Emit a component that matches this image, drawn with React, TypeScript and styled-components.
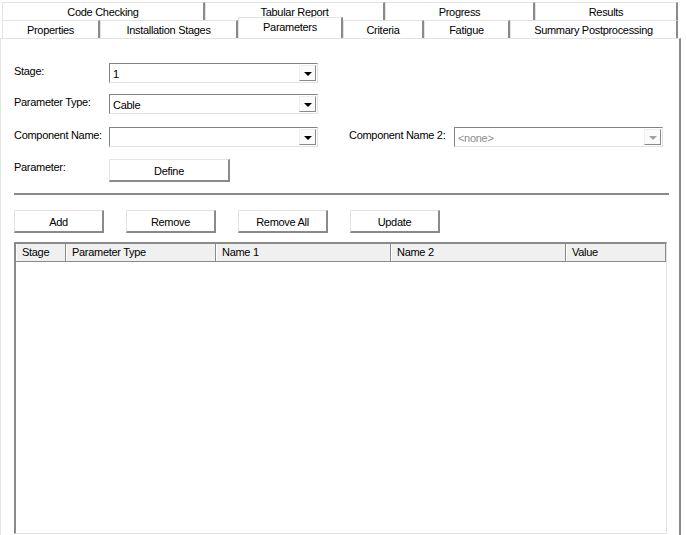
import React from "react";
import styled, { createGlobalStyle } from "styled-components";

const Global = createGlobalStyle`
  html, body {
    margin: 0;
    padding: 0;
    background: #ffffff;
  }
  body {
    font-family: "Liberation Sans", Arial, sans-serif;
    font-size: 11px;
    letter-spacing: -0.3px;
    color: #000;
  }
`;

const Window = styled.div`
  width: 686px;
  height: 535px;
  overflow: hidden;
  background: #fff;
  display: flex;
  flex-direction: column;
`;

const TabStrip = styled.div`
  padding-top: 2px;
  display: flex;
  flex-direction: column;
  height: 36px;
`;

const TabRow = styled.div`
  display: flex;
  height: 18px;
  padding-left: 2px;
  position: relative;
`;

const Tab = styled.div<{ $w: number; $active?: boolean }>`
  width: ${(p) => p.$w}px;
  box-sizing: border-box;
  height: ${(p) => (p.$active ? 21 : 18)}px;
  margin-top: ${(p) => (p.$active ? -3 : 0)}px;
  border-top: 1px solid #e3e3e3;
  border-left: 1px solid #e3e3e3;
  border-right: 2px solid #8a8a8a;
  background: #fff;
  display: flex;
  align-items: center;
  justify-content: center;
  padding-top: ${(p) => (p.$active ? 0 : 1)}px;
  padding-bottom: ${(p) => (p.$active ? 3 : 0)}px;
  white-space: nowrap;
  position: relative;
  z-index: ${(p) => (p.$active ? 2 : 1)};
`;

const Panel = styled.div`
  flex: 1;
  width: 681px;
  box-sizing: border-box;
  border-top: 1px solid #e3e3e3;
  border-left: 1px solid #e3e3e3;
  border-right: 2px solid #8a8a8a;
  padding: 24px 0 0 13px;
  display: flex;
  flex-direction: column;
`;

const FormRow = styled.div<{ $h: number }>`
  display: flex;
  align-items: flex-start;
  height: ${(p) => p.$h}px;
`;

const Label = styled.div<{ $w: number }>`
  width: ${(p) => p.$w}px;
  padding-top: 2px;
  white-space: nowrap;
`;

const Combo = styled.div<{ $disabled?: boolean }>`
  width: 209px;
  height: 20px;
  box-sizing: border-box;
  border-top: 1px solid #828282;
  border-left: 1px solid #828282;
  border-right: 1px solid #e3e3e3;
  border-bottom: 1px solid #e3e3e3;
  display: flex;
  align-items: center;
  background: #fff;
  color: ${(p) => (p.$disabled ? "#8d8d8d" : "#000")};
`;

const ComboText = styled.div`
  flex: 1;
  padding-left: 3px;
  padding-top: 2px;
`;

const DropButton = styled.div<{ $disabled?: boolean }>`
  width: 17px;
  height: 16px;
  box-sizing: border-box;
  margin-right: 1px;
  border-top: 1px solid #f0f0f0;
  border-left: 1px solid #f0f0f0;
  border-right: 1px solid #8a8a8a;
  border-bottom: 1px solid #8a8a8a;
  background: #fafafa;
  display: flex;
  align-items: center;
  justify-content: center;
  &::after {
    content: "";
    display: block;
    width: 0;
    height: 0;
    margin-top: 1px;
    border-left: 4px solid transparent;
    border-right: 4px solid transparent;
    border-top: 4px solid ${(p) => (p.$disabled ? "#a0a0a0" : "#000")};
  }
`;

const Spacer = styled.div<{ $w: number }>`
  width: ${(p) => p.$w}px;
  flex-shrink: 0;
`;

const Button = styled.div<{ $w: number }>`
  width: ${(p) => p.$w}px;
  height: 23px;
  box-sizing: border-box;
  border-top: 1px solid #e3e3e3;
  border-left: 1px solid #e3e3e3;
  border-right: 2px solid #8a8a8a;
  border-bottom: 2px solid #8a8a8a;
  background: #fff;
  display: flex;
  align-items: center;
  justify-content: center;
  padding-top: 1px;
  flex-shrink: 0;
`;

const Separator = styled.div`
  width: 655px;
  height: 2px;
  margin-top: 11px;
  background: #8a8a8a;
`;

const ButtonBar = styled.div`
  display: flex;
  gap: 22px;
  margin-top: 15px;
`;

const List = styled.div`
  margin-top: 9px;
  width: 653px;
  height: 292px;
  box-sizing: border-box;
  border-top: 2px solid #8a8a8a;
  border-left: 2px solid #8a8a8a;
  border-right: 1px solid #e3e3e3;
  border-bottom: 1px solid #e3e3e3;
  background: #fff;
`;

const Header = styled.div`
  display: flex;
  height: 18px;
  background: #f0f0f0;
  border-bottom: 1px solid #8a8a8a;
  box-sizing: border-box;
`;

const HeaderCell = styled.div<{ $w: number }>`
  width: ${(p) => p.$w}px;
  box-sizing: border-box;
  border-left: 1px solid #fff;
  border-right: 1px solid #8a8a8a;
  padding-left: 5px;
  padding-top: 2px;
  white-space: nowrap;
`;

const row1 = [
  { t: "Code Checking", w: 203 },
  { t: "Tabular Report", w: 180 },
  { t: "Progress", w: 150 },
  { t: "Results", w: 143 },
];

const row2 = [
  { t: "Properties", w: 98 },
  { t: "Installation Stages", w: 138 },
  { t: "Parameters", w: 105, active: true },
  { t: "Criteria", w: 81 },
  { t: "Fatigue", w: 86 },
  { t: "Summary Postprocessing", w: 168 },
];

const columns = [
  { t: "Stage", w: 50 },
  { t: "Parameter Type", w: 150 },
  { t: "Name 1", w: 175 },
  { t: "Name 2", w: 175 },
  { t: "Value", w: 100 },
];

export default function App() {
  return (
    <Window>
      <Global />
      <TabStrip>
        <TabRow>
          {row1.map((t) => (
            <Tab key={t.t} $w={t.w}>
              {t.t}
            </Tab>
          ))}
        </TabRow>
        <TabRow>
          {row2.map((t) => (
            <Tab key={t.t} $w={t.w} $active={t.active}>
              {t.t}
            </Tab>
          ))}
        </TabRow>
      </TabStrip>
      <Panel>
        <FormRow $h={31}>
          <Label $w={95}>Stage:</Label>
          <Combo>
            <ComboText>1</ComboText>
            <DropButton />
          </Combo>
        </FormRow>
        <FormRow $h={33}>
          <Label $w={95}>Parameter Type:</Label>
          <Combo>
            <ComboText>Cable</ComboText>
            <DropButton />
          </Combo>
        </FormRow>
        <FormRow $h={32}>
          <Label $w={95}>Component Name:</Label>
          <Combo>
            <ComboText></ComboText>
            <DropButton />
          </Combo>
          <Spacer $w={31} />
          <Label $w={105}>Component Name 2:</Label>
          <Combo $disabled>
            <ComboText>&lt;none&gt;</ComboText>
            <DropButton $disabled />
          </Combo>
        </FormRow>
        <FormRow $h={23}>
          <Label $w={95}>Parameter:</Label>
          <Button $w={121}>Define</Button>
        </FormRow>
        <Separator />
        <ButtonBar>
          <Button $w={90}>Add</Button>
          <Button $w={90}>Remove</Button>
          <Button $w={90}>Remove All</Button>
          <Button $w={90}>Update</Button>
        </ButtonBar>
        <List>
          <Header>
            {columns.map((c) => (
              <HeaderCell key={c.t} $w={c.w}>
                {c.t}
              </HeaderCell>
            ))}
          </Header>
        </List>
      </Panel>
    </Window>
  );
}
